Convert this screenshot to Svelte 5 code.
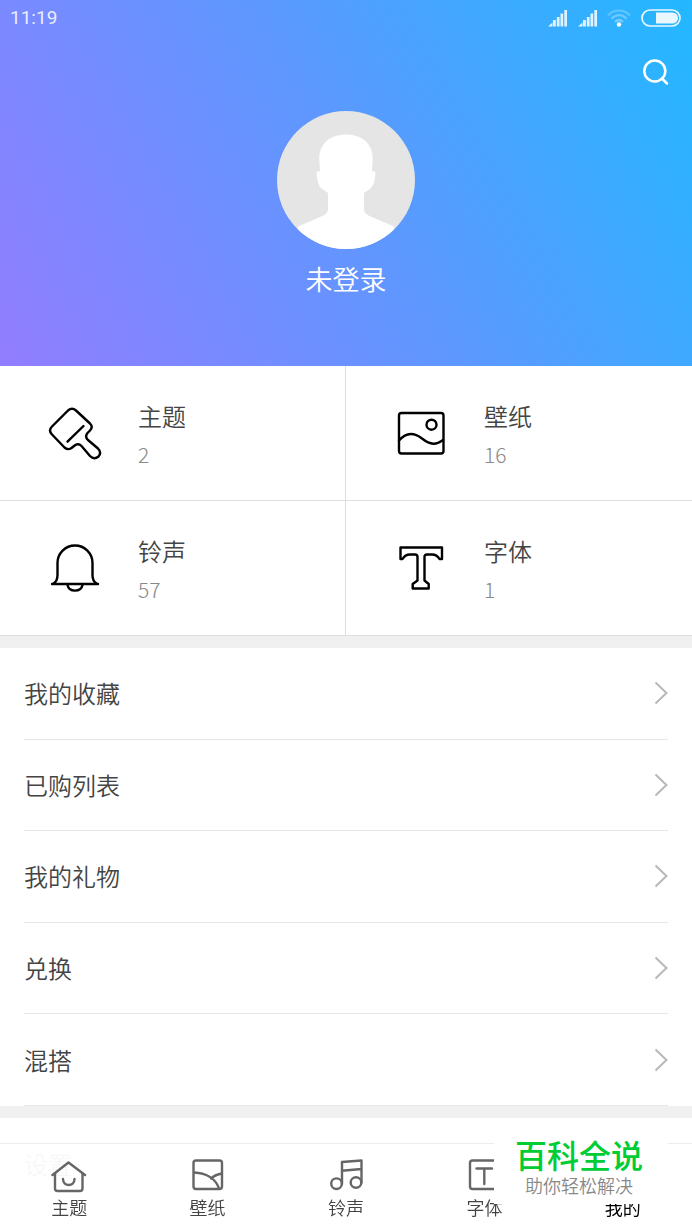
<script>
  const tiles = [
    { icon: 'brush', title: '主题', count: 2 },
    { icon: 'picture', title: '壁纸', count: 16 },
    { icon: 'bell', title: '铃声', count: 57 },
    { icon: 'font', title: '字体', count: 1 },
  ];

  const links = ['我的收藏', '已购列表', '我的礼物', '兑换', '混搭'];

  const tabs = [
    { icon: 'home', label: '主题' },
    { icon: 'wallpaper', label: '壁纸' },
    { icon: 'music', label: '铃声' },
    { icon: 'type', label: '字体' },
    { icon: 'user', label: '我的' },
  ];

  let active = $state('我的');
</script>

{#snippet signal()}
  <svg class="signal" viewBox="0 0 20 18" aria-hidden="true">
    <path d="M1 17.500l4.500-4v4zM6 11h2.800v6.500H6zM9.800 8h2.800v9.500H9.800zM13.500 4.500h2.700v13h-2.700zM17.300 1H20v16.500h-2.700z" />
  </svg>
{/snippet}

{#snippet chevron()}
  <svg class="chevron" viewBox="0 0 14 24" aria-hidden="true">
    <path d="M1.500 1.500l11 10.500-11 10.500" />
  </svg>
{/snippet}

<div class="page">
  <header>
    <div class="status">
      <span class="time">11:19</span>
      {@render signal()}
      {@render signal()}
      <svg class="wifi" viewBox="0 0 24 18" aria-hidden="true">
        <g fill="none" stroke="#fff" stroke-width="2.200">
          <path opacity=".25" d="M1 6.500C7-.2 17-.2 23 6.500" />
          <path opacity=".3" d="M4.500 9.800c4.500-4.800 10.500-4.800 15 0" />
          <path opacity=".35" d="M8 13c2.500-2.500 5.500-2.500 8 0" />
        </g>
        <circle cx="12" cy="15.500" r="2.200" fill="#fff" />
      </svg>
      <svg class="battery" viewBox="0 0 40 18" aria-hidden="true">
        <rect x="1" y="1" width="38" height="16" rx="8" fill="none" stroke="#fff" stroke-width="1.700" />
        <path d="M15 3.500h16.500a5.500 5.500 0 0 1 0 11H15z" fill="#fff" />
      </svg>
    </div>

    <div class="toolbar">
      <button type="button" class="search" aria-label="搜索">
        <svg viewBox="0 0 28 28" aria-hidden="true">
          <circle cx="12.800" cy="13" r="10.500" />
          <path d="M20 20.500l5 5" />
        </svg>
      </button>
    </div>

    <svg class="avatar" viewBox="0 0 138 138" aria-hidden="true">
      <clipPath id="round"><circle cx="69" cy="69" r="69" /></clipPath>
      <g clip-path="url(#round)">
        <rect width="138" height="138" fill="#e5e5e5" />
        <path
          fill="#fff"
          d="M69 23.500C53 23.500 42 33 42.300 48L43 60.500Q39 59 39.700 64C40.500 73 43 77 46 78.500L51 82V98Q51 102 46.500 104.500L21 115.500V138H117V115.500L91.500 104.500Q87 102 87 98V82L92 78.500C95 77 97.500 73 98.300 64Q99 59 95 60.500L95.700 48C96 33 85 23.500 69 23.500Z"
        />
      </g>
    </svg>
    <h1>未登录</h1>
  </header>

  <nav class="tiles">
    {#each tiles as tile}
      <a class="tile" href="#{tile.icon}">
        <svg viewBox="0 0 54 54" aria-hidden="true">
          {#if tile.icon === 'brush'}
            <path d="M4 20.500L20 4.500Q24 1 28 4.500L42 17.500Q45.500 21 42 24.500L39.500 27Q36.500 30.500 40 34L50 42.500Q54 46.500 50.500 50.500Q46 54 42 50L33.500 40Q30 36.500 26 40L23.500 42Q20 44.500 16.500 41.500L4 28.500Q0 24.500 4 20.500Z" />
            <path d="M19.500 35.700L35.500 20" />
          {:else if tile.icon === 'picture'}
            <rect x="5" y="7" width="44.500" height="40.500" rx="2.500" />
            <circle cx="37.500" cy="18.700" r="5" />
            <path d="M5 34.500C11 27.500 19 25.500 28 32.500S42 39 49 34" />
          {:else if tile.icon === 'bell'}
            <path d="M5.500 42.500Q9.500 40 9.500 34V22A17.500 17.500 0 0 1 44.500 22V34Q44.500 40 48.500 42.500" />
            <path d="M4 43H50" />
            <path d="M19.500 44C21 51.500 33 51.500 34.500 44" />
          {:else}
            <path d="M6.500 6.500H48V18H45.500Q43 13.500 38 13.500H33Q30.500 13.500 30.500 16V39.500L34.700 43V47.500H18.700V43L23.500 39.500V16Q23.500 13.500 21 13.500H16Q11 13.500 8.500 18H6.500Z" />
          {/if}
        </svg>
        <span class="info">
          <span class="title">{tile.title}</span>
          <span class="count">{tile.count}</span>
        </span>
      </a>
    {/each}
  </nav>

  <ul class="list">
    {#each links as link}
      <li><a href="#{link}">{link}{@render chevron()}</a></li>
    {/each}
  </ul>

  <ul class="list settings">
    <li><a href="#settings">设置{@render chevron()}</a></li>
  </ul>
</div>

<nav class="tabbar">
  {#each tabs as tab}
    <a
      href="#{tab.icon}"
      class:active={active === tab.label}
      onclick={() => (active = tab.label)}
    >
      <svg viewBox="0 0 36 36" aria-hidden="true">
        {#if tab.icon === 'home'}
          <path d="M1.500 17L17.500 4.500 34 17" />
          <path d="M4 15.500V30.500Q4 33 6.500 33H29Q31.500 33 31.500 30.500V15.500" />
          <path d="M12 21C12 29 23.500 29 23.500 21" />
        {:else if tab.icon === 'wallpaper'}
          <rect x="3.500" y="2.500" width="28.500" height="28.500" rx="2.500" />
          <path d="M4 14.500C15.500 15 25.500 20 29 30.500M21 20.500Q25.500 16.500 32 15.500" />
        {:else if tab.icon === 'music'}
          <circle cx="8.500" cy="25.700" r="5.300" />
          <circle cx="28" cy="24.500" r="5.300" />
          <path d="M14 25.700V4L33.500 2.500V24.500M14 12.700L33.500 11" />
        {:else if tab.icon === 'type'}
          <rect x="4" y="2.500" width="28.500" height="28.500" rx="2.500" />
          <path d="M10.500 10.500H26M18.300 10.500V26" />
        {:else}
          <circle cx="18" cy="11" r="7" />
          <path d="M4 31C4 18 32 18 32 31Z" />
        {/if}
      </svg>
      <span>{tab.label}</span>
    </a>
  {/each}
</nav>

<aside class="badge">
  <strong>百科全说</strong>
  <span>助你轻松解决</span>
</aside>

<style>
  :global(body) {
    background: #fff;
    font-family: 'Noto Sans CJK SC', sans-serif;
    font-weight: 350;
    color: #444;
  }
  a {
    color: inherit;
    text-decoration: none;
  }
  header {
    display: flex;
    flex-direction: column;
    align-items: center;
    padding-bottom: 69px;
    background: linear-gradient(60deg, #927dff, #5f97ff 50%, #22b8ff);
    color: #fff;
  }
  .status {
    display: flex;
    align-items: center;
    align-self: stretch;
    gap: 10px;
    height: 36px;
    padding: 0 11px 0 10px;
    box-sizing: border-box;
  }
  .time {
    margin-right: auto;
    font: 19px/36px Roboto, sans-serif;
    opacity: 0.85;
  }
  .signal {
    width: 20px;
    height: 18px;
    fill: #fff;
    opacity: 0.85;
  }
  .wifi {
    width: 24px;
    height: 18px;
  }
  .battery {
    width: 40px;
    height: 18px;
    opacity: 0.9;
  }
  .toolbar {
    display: flex;
    justify-content: flex-end;
    align-self: stretch;
    padding: 12px;
  }
  .search {
    width: 48px;
    height: 48px;
    padding: 10px;
    border: 0;
    background: none;
  }
  .search svg {
    display: block;
    width: 28px;
    height: 28px;
    fill: none;
    stroke: #fff;
    stroke-width: 2.5;
    stroke-linecap: round;
  }
  .avatar {
    width: 138px;
    height: 138px;
    margin-top: 3px;
  }
  h1 {
    margin: 12px 0 0;
    font-size: 27px;
    line-height: 36px;
    font-weight: 350;
  }

  .tiles {
    display: grid;
    grid-template-columns: 1fr 1fr;
    border-bottom: 12px solid #f0f0f0;
  }
  .tile {
    display: flex;
    align-items: center;
    gap: 36px;
    height: 134px;
    padding-left: 48px;
    border-bottom: 1px solid #dedede;
  }
  .tile:nth-child(odd) {
    border-right: 1px solid #dedede;
  }
  .tile svg {
    width: 54px;
    height: 54px;
    fill: none;
    stroke: #000;
    stroke-width: 2.4;
    stroke-linejoin: round;
    stroke-linecap: round;
  }
  .info {
    display: flex;
    flex-direction: column;
    padding-top: 4px;
  }
  .title {
    font-size: 24px;
    line-height: 38px;
  }
  .count {
    font-size: 21px;
    line-height: 38px;
    font-weight: 300;
    color: #888;
  }

  .list {
    display: grid;
    grid-auto-rows: 1fr;
    min-height: 458px;
    margin: 0;
    padding: 0 24px;
    list-style: none;
    border-bottom: 12px solid #f0f0f0;
  }
  .list li {
    display: grid;
    border-bottom: 1px solid #e6e6e6;
  }
  .list a {
    display: flex;
    align-items: center;
    justify-content: space-between;
    font-size: 24px;
    line-height: 36px;
  }
  .chevron {
    width: 14px;
    height: 24px;
    fill: none;
    stroke: #b8b8b8;
    stroke-width: 2;
  }
  .settings {
    min-height: 92px;
    border-bottom: 0;
  }
  .settings li {
    border-bottom: 0;
  }

  .tabbar {
    position: fixed;
    inset: auto 0 0;
    display: grid;
    grid-template-columns: repeat(5, 1fr);
    height: 86px;
    border-top: 1px solid #ececec;
    background: rgba(255, 255, 255, 0.96);
  }
  .tabbar a {
    display: flex;
    flex-direction: column;
    align-items: center;
    padding-top: 14px;
    font-size: 18px;
    line-height: 26px;
  }
  .tabbar svg {
    width: 36px;
    height: 36px;
    fill: none;
    stroke: #666;
    stroke-width: 2.4;
    stroke-linejoin: round;
    stroke-linecap: round;
  }
  .tabbar .active {
    color: #000;
    font-weight: 400;
  }

  .badge {
    position: fixed;
    right: 24px;
    bottom: 26px;
    display: flex;
    flex-direction: column;
    align-items: center;
    width: 174px;
    padding: 4px 4px 8px 0;
    box-sizing: border-box;
    background: #fff;
  }
  .badge strong {
    font-size: 32px;
    line-height: 40px;
    font-weight: 500;
    color: #0c3;
  }
  .badge span {
    font-size: 18px;
    line-height: 22px;
    color: #888;
  }
</style>
